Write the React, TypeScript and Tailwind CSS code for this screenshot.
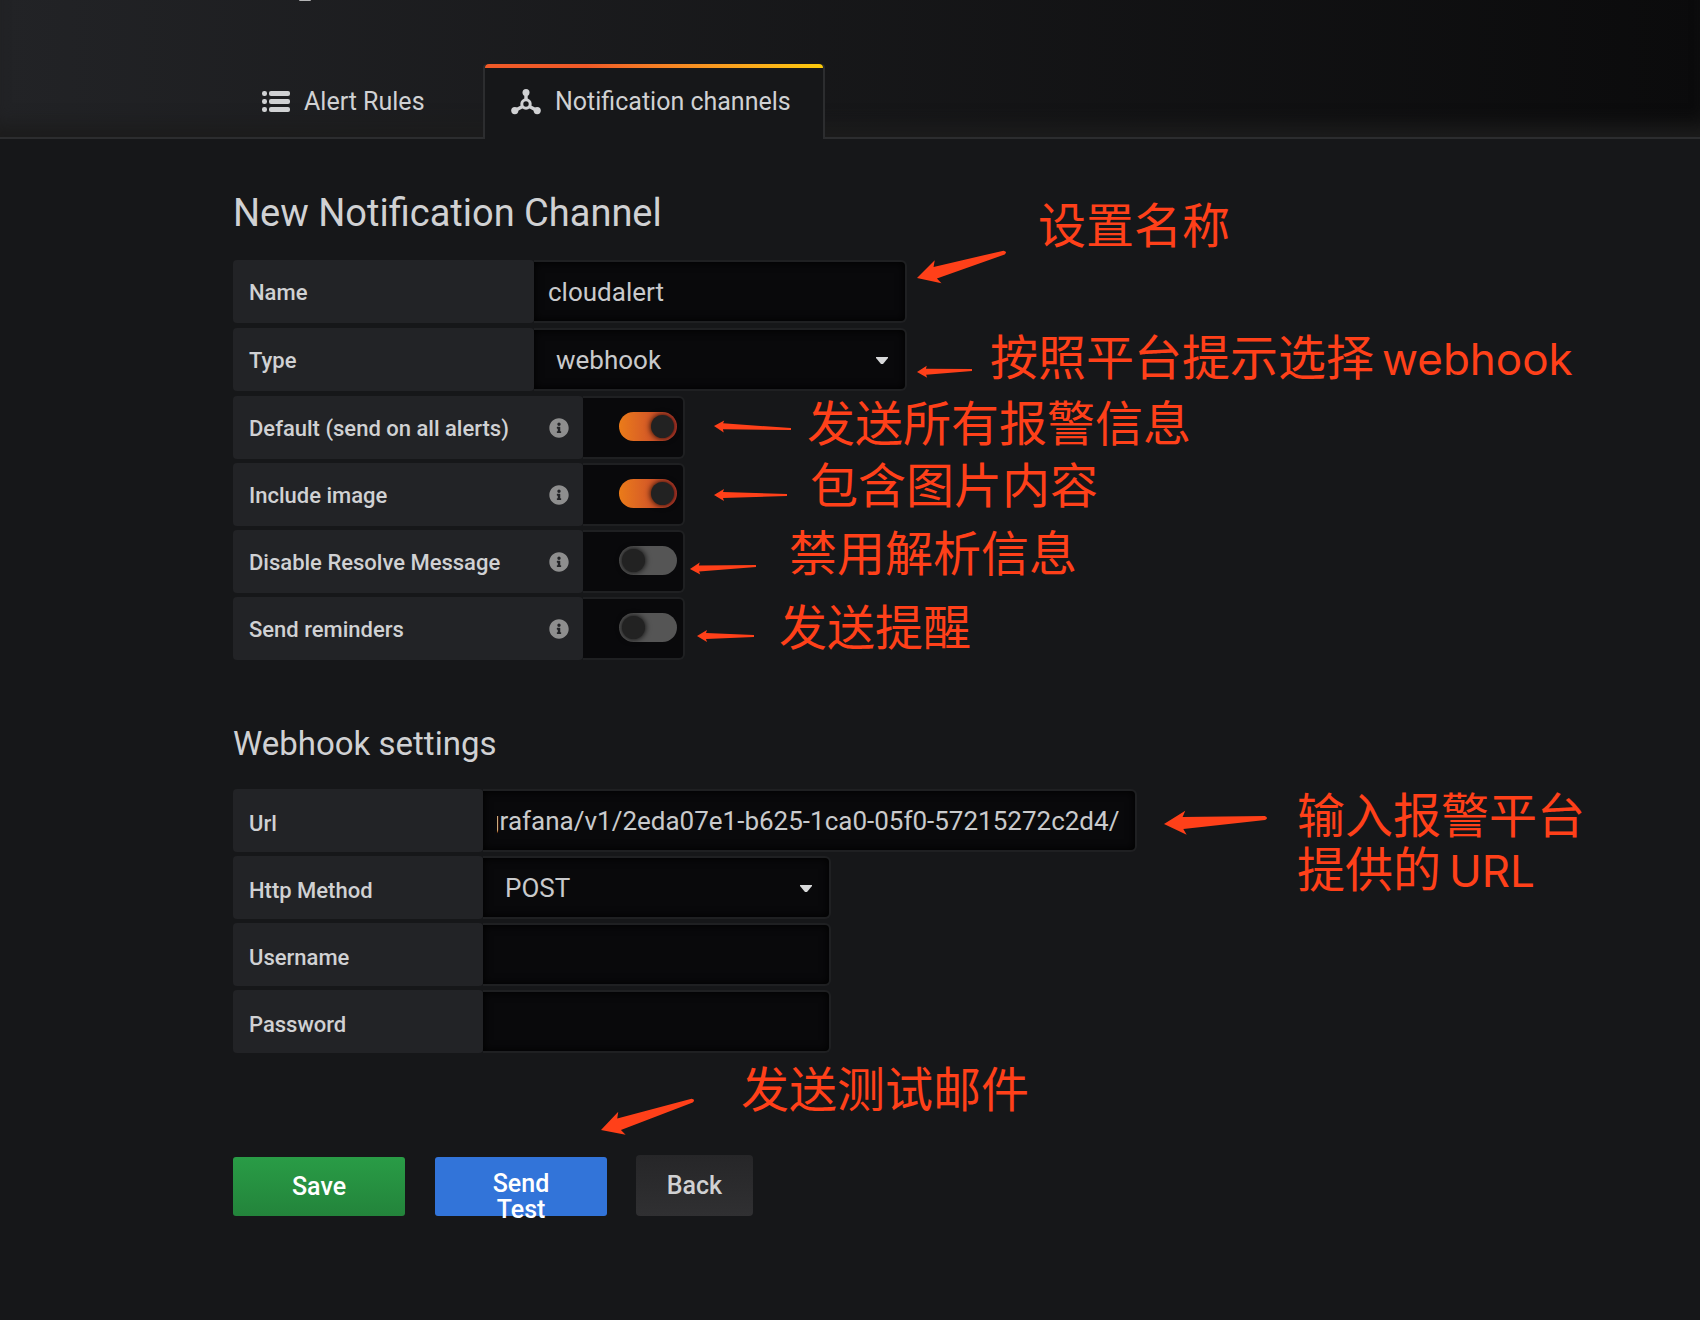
import React, { useEffect, useRef } from "react";
import { FaInfoCircle } from "react-icons/fa";

const labelStyle =
  "flex h-[63px] shrink-0 items-center justify-between rounded-[4px] bg-[#222326] px-4 text-[22px] font-medium text-[#d0d1d3]";
const controlStyle =
  "h-[63px] rounded-r-[6px] border-2 border-l-0 border-[#1f2022] bg-[#09090b] text-[26px] text-[#c9cacc] shadow-[inset_0_0_10px_#000] outline-none";

const toggles = [
  { id: "default", title: "Default (send on all alerts)", checked: true },
  { id: "image", title: "Include image", checked: true },
  { id: "resolve", title: "Disable Resolve Message", checked: false },
  { id: "reminders", title: "Send reminders", checked: false },
];

// tip and tail in page pixels, large arrows get a wider head
const arrows = [
  { tip: [917, 278], tail: [1006, 252], large: true },
  { tip: [917, 372], tail: [972, 370], large: false },
  { tip: [714, 426], tail: [791, 429], large: false },
  { tip: [714, 495], tail: [787, 495], large: false },
  { tip: [690, 569], tail: [756, 566], large: false },
  { tip: [697, 636], tail: [754, 636], large: false },
  { tip: [1164, 824], tail: [1267, 818], large: true },
  { tip: [601, 1130], tail: [694, 1100], large: true },
];

const Arrow = ({ tip, tail, large }: any) => {
  const dx = tail[0] - tip[0];
  const dy = tail[1] - tip[1];
  const length = Math.hypot(dx, dy);
  const angle = (Math.atan2(dy, dx) * 180) / Math.PI;
  const d = large
    ? `M0 0L22 -12L19 -6L${length - 2} -2Q${length + 2} 0 ${length - 2} 2L19 6L22 12Z`
    : `M0 0L10 -6L9 -3L${length} -1V1L9 3L10 6Z`;
  return (
    <path d={d} transform={`translate(${tip[0]} ${tip[1]}) rotate(${angle})`} />
  );
};

const ListIcon = () => (
  <svg
    viewBox="0 0 28 22"
    className="h-[22px] w-7"
    fill="currentColor"
    aria-hidden="true"
  >
    {[0, 8, 16].map((y) => (
      <g key={y}>
        <rect x="0" y={y} width="5" height="5" rx="2.2" />
        <rect x="7" y={y} width="21" height="5" rx="2" />
      </g>
    ))}
  </svg>
);

const ChannelIcon = () => (
  <svg viewBox="0 0 30 26" className="h-[26px] w-[30px]" aria-hidden="true">
    <g fill="none" stroke="currentColor" strokeWidth="3">
      <circle cx="15" cy="15" r="4.2" />
      <path d="M15 11V4M11.5 17.5L4 21.5M18.5 17.5L26 21.5" strokeWidth="3.4" />
    </g>
    <g fill="currentColor">
      <circle cx="15" cy="3.6" r="3.5" />
      <circle cx="3.8" cy="21.6" r="3.6" />
      <circle cx="26.2" cy="21.6" r="3.6" />
    </g>
  </svg>
);

const Field = ({ id, title, wide, children }: any) => (
  <div className="flex">
    <label
      htmlFor={id}
      className={`${labelStyle} ${wide ? "w-[301px] pt-[2px]" : "w-[250px] pt-[6px]"}`}
    >
      {title}
    </label>
    {children}
  </div>
);

const SelectField = ({ id, value, className }: any) => (
  <div className="relative">
    <select
      id={id}
      defaultValue={value}
      className={`${controlStyle} appearance-none pt-[2px] pl-[22px] ${className}`}
    >
      <option value={value}>{value}</option>
    </select>
    <svg
      viewBox="0 0 12 8"
      className="pointer-events-none absolute top-[29px] right-[19px] h-2 w-3"
      aria-hidden="true"
    >
      <path d="M0 0H12V1L7 7H5L0 1Z" fill="#d8d9da" />
    </svg>
  </div>
);

const ToggleField = ({ id, title, checked }: any) => (
  <div className="flex">
    <label htmlFor={id} className={`${labelStyle} w-[350px] pr-[14px]`}>
      <span className="pt-[2px]">{title}</span>
      <FaInfoCircle className="size-5 text-[#8e8e8e]" />
    </label>
    <div className="flex h-[63px] w-[102px] items-center justify-end rounded-r-[6px] border-2 border-l-0 border-[#1f2022] bg-[#09090b] pr-[6px] pb-[2px]">
      <input
        id={id}
        type="checkbox"
        role="switch"
        defaultChecked={checked}
        className="h-[29px] w-[58px] appearance-none rounded-full bg-[#555] before:m-[3px] before:block before:size-[23px] before:rounded-full before:bg-[#222] before:shadow-[0_0_6px_#000] checked:bg-linear-to-r checked:from-[#eb7b18] checked:to-[#c0392b] checked:before:ml-[32px]"
      />
    </div>
  </div>
);

const Note = ({ className, children }: any) => (
  <p
    className={`absolute font-[Inter,'Noto_Sans_CJK_SC',sans-serif] text-[48px] leading-[54px] font-normal whitespace-nowrap text-[#ff4019] ${className}`}
  >
    {children}
  </p>
);

const Latin = ({ children }: any) => (
  <span className="ml-2 text-[44px]">{children}</span>
);

const App = () => {
  const urlRef = useRef<HTMLInputElement>(null);

  useEffect(() => {
    // keep the end of a long url in view
    if (urlRef.current) {
      urlRef.current.scrollLeft = urlRef.current.scrollWidth;
    }
  }, []);

  return (
    <div className="relative min-h-screen overflow-hidden bg-[#161719] font-[Roboto,sans-serif] text-[#d0d1d3]">
      <div className="absolute top-0 left-[299px] h-px w-3 rounded-b-full bg-[#b4b5b6]" />
      <header className="flex h-[139px] items-end border-b-2 border-[#2c2d2f] bg-linear-to-r from-[#222326] to-[#0b0b0c] pl-[234px] shadow-[inset_0_-22px_18px_-10px_#1c1c1c]">
        <nav className="flex h-[73px] text-[25px]">
          <a
            href="#rules"
            className="flex w-[249px] items-center gap-[14px] pt-[2px] pl-7"
          >
            <ListIcon />
            Alert Rules
          </a>
          <a
            href="#channels"
            className="relative -mb-[2px] flex w-[342px] items-center gap-[14px] rounded-t-[4px] border-x-2 border-[#2c2d2f] bg-[#161719] pl-[26px] before:absolute before:inset-x-0 before:top-0 before:h-1 before:rounded-t-[4px] before:bg-linear-to-r before:from-[#f05a28] before:from-30% before:to-[#fbca0a]"
          >
            <ChannelIcon />
            Notification channels
          </a>
        </nav>
      </header>

      <main className="pt-[50px] pl-[233px]">
        <form>
          <h1 className="text-[38px] leading-[48px]">
            New Notification Channel
          </h1>
          <div className="mt-[23px] flex flex-col gap-[5px]">
            <Field id="name" title="Name" wide>
              <input
                id="name"
                defaultValue="cloudalert"
                className={`${controlStyle} w-[373px] px-[14px]`}
              />
            </Field>
            <Field id="type" title="Type" wide>
              <SelectField id="type" value="webhook" className="w-[373px]" />
            </Field>
          </div>
          <div className="mt-[5px] flex flex-col gap-1">
            {toggles.map((item) => (
              <ToggleField key={item.id} {...item} />
            ))}
          </div>

          <h2 className="mt-16 text-[33px] leading-[40px]">Webhook settings</h2>
          <div className="mt-[25px] flex flex-col gap-1">
            <Field id="url" title="Url">
              <input
                id="url"
                ref={urlRef}
                defaultValue="grafana/v1/2eda07e1-b625-1ca0-05f0-57215272c2d4/"
                className={`${controlStyle} w-[654px] pr-4 pl-[14px]`}
              />
            </Field>
            <Field id="method" title="Http Method">
              <SelectField id="method" value="POST" className="w-[348px]" />
            </Field>
            <Field id="username" title="Username">
              <input
                id="username"
                className={`${controlStyle} w-[348px] px-[14px]`}
              />
            </Field>
            <Field id="password" title="Password">
              <input
                id="password"
                type="password"
                className={`${controlStyle} w-[348px] px-[14px]`}
              />
            </Field>
          </div>

          <div className="mt-[102px] flex items-end text-[25px] font-medium">
            <button
              type="submit"
              className="h-[59px] w-[172px] rounded-[3px] bg-linear-to-b from-[#299c46] to-[#23843b] text-white"
            >
              Save
            </button>
            <button
              type="button"
              className="ml-[30px] h-[59px] w-[172px] rounded-[3px] bg-[#3274d9] px-10 pt-[14px] leading-[26px] text-white"
            >
              Send Test
            </button>
            <button
              type="button"
              className="ml-[29px] h-[61px] w-[117px] rounded-[4px] bg-linear-to-b from-[#262628] to-[#303032]"
            >
              Back
            </button>
          </div>
        </form>
      </main>

      <svg
        className="pointer-events-none absolute top-0 left-0 h-[1320px] w-[1700px] fill-[#ff4019]"
        aria-hidden="true"
      >
        {arrows.map((arrow, i) => (
          <Arrow key={i} {...arrow} />
        ))}
      </svg>
      <Note className="top-[199px] left-[1038px]">设置名称</Note>
      <Note className="top-[331px] left-[990px]">
        按照平台提示选择<Latin>webhook</Latin>
      </Note>
      <Note className="top-[397px] left-[807px]">发送所有报警信息</Note>
      <Note className="top-[459px] left-[810px]">包含图片内容</Note>
      <Note className="top-[527px] left-[789px]">禁用解析信息</Note>
      <Note className="top-[601px] left-[779px]">发送提醒</Note>
      <Note className="top-[789px] left-[1297px]">
        输入报警平台
        <br />
        提供的<Latin>URL</Latin>
      </Note>
      <Note className="top-[1063px] left-[741px]">发送测试邮件</Note>
    </div>
  );
};

export default App;
